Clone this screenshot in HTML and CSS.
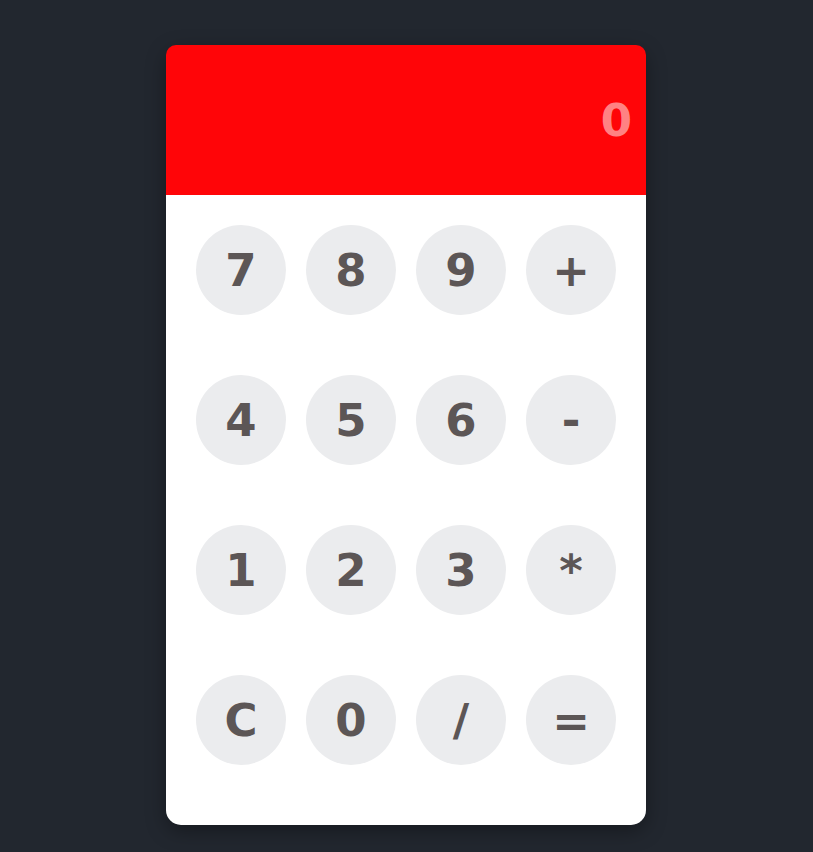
FILE: index.html
```html
<!DOCTYPE html>
<html lang="en">
<head>
<meta charset="utf-8">
<title>Calculator</title>
<link rel="stylesheet" href="styles.css">
</head>
<body>
<div class="calc">
  <div class="display">0</div>
  <div class="keys">
    <button class="key">7</button>
    <button class="key">8</button>
    <button class="key">9</button>
    <button class="key">+</button>
    <button class="key">4</button>
    <button class="key">5</button>
    <button class="key">6</button>
    <button class="key">-</button>
    <button class="key">1</button>
    <button class="key">2</button>
    <button class="key">3</button>
    <button class="key">*</button>
    <button class="key">C</button>
    <button class="key">0</button>
    <button class="key">/</button>
    <button class="key">=</button>
  </div>
</div>
</body>
</html>
```
FILE: styles.css
```css
html, body {
  margin: 0;
  padding: 0;
}
body {
  background: #22272f;
  min-height: 852px;
  font-family: "DejaVu Sans", Verdana, sans-serif;
  padding: 45px 0 0 166px;
  box-sizing: border-box;
}
.calc {
  width: 480px;
  border-radius: 15px;
  box-shadow: 0 6px 20px rgba(0, 0, 0, 0.35);
}
.display {
  height: 150px;
  background: #ff0508;
  border-radius: 10px 10px 0 0;
  color: rgba(255, 255, 255, 0.52);
  font-size: 45px;
  font-weight: bold;
  display: flex;
  align-items: center;
  justify-content: flex-end;
  padding: 0 14px;
  box-sizing: border-box;
}
.keys {
  background: #ffffff;
  border-radius: 0 0 15px 15px;
  display: grid;
  grid-template-columns: repeat(4, 90px);
  column-gap: 20px;
  row-gap: 60px;
  padding: 30px 30px 60px;
}
.key {
  width: 90px;
  height: 90px;
  border: none;
  border-radius: 50%;
  background: #ebecee;
  color: #5c5656;
  font-family: "DejaVu Sans", Verdana, sans-serif;
  font-size: 45px;
  font-weight: bold;
  padding: 0;
  display: flex;
  align-items: center;
  justify-content: center;
  cursor: pointer;
}
```
